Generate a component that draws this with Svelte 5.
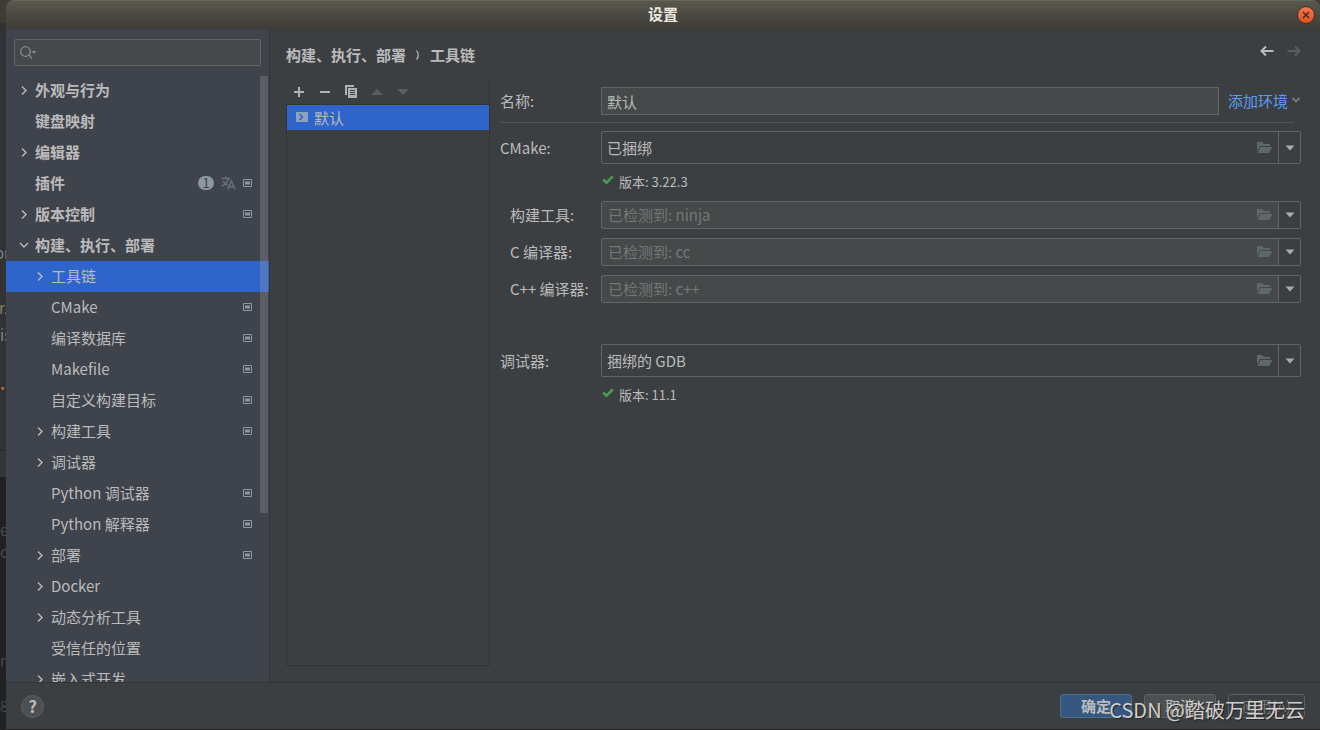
<script lang="ts">
  interface TreeItem {
    label: string;
    level: number;
    arrow?: 'closed' | 'open';
    project?: boolean;
    badge?: number;
  }

  const tree: TreeItem[] = [
    { label: '外观与行为', level: 0, arrow: 'closed' },
    { label: '键盘映射', level: 0 },
    { label: '编辑器', level: 0, arrow: 'closed' },
    { label: '插件', level: 0, badge: 1, project: true },
    { label: '版本控制', level: 0, arrow: 'closed', project: true },
    { label: '构建、执行、部署', level: 0, arrow: 'open' },
    { label: '工具链', level: 1, arrow: 'closed' },
    { label: 'CMake', level: 1, project: true },
    { label: '编译数据库', level: 1, project: true },
    { label: 'Makefile', level: 1, project: true },
    { label: '自定义构建目标', level: 1, project: true },
    { label: '构建工具', level: 1, arrow: 'closed', project: true },
    { label: '调试器', level: 1, arrow: 'closed' },
    { label: 'Python 调试器', level: 1, project: true },
    { label: 'Python 解释器', level: 1, project: true },
    { label: '部署', level: 1, arrow: 'closed', project: true },
    { label: 'Docker', level: 1, arrow: 'closed' },
    { label: '动态分析工具', level: 1, arrow: 'closed' },
    { label: '受信任的位置', level: 1 },
    { label: '嵌入式开发', level: 1, arrow: 'closed' },
  ];

  const tools = [
    { id: 'build-tool', label: '构建工具:', hint: '已检测到: ninja' },
    { id: 'c-compiler', label: 'C 编译器:', hint: '已检测到: cc' },
    { id: 'cpp-compiler', label: 'C++ 编译器:', hint: '已检测到: c++' },
  ];

  // code of the editor window that shows past the dialog's left edge
  const fragments = [
    { text: 'or', left: -5, top: 242, color: '#7f8386' },
    { text: 'r.', left: -1, top: 297, color: '#8f7c66' },
    { text: 'is', left: 0, top: 324, color: '#8a8378' },
    { text: '•', left: -5, top: 377, color: '#a5683a' },
    { text: 'e', left: 0, top: 519, color: '#4a4a4a' },
    { text: 'o', left: 0, top: 541, color: '#4a4a4a' },
    { text: 'n', left: 0, top: 650, color: '#4a4a4a' },
    { text: '8', left: 0, top: 695, color: '#4a4a4a' },
  ];

  let selected = $state('工具链');
  let name = $state('默认');
</script>

{#snippet chevron(open: boolean)}
  <svg width="12" height="12" viewBox="0 0 12 12" fill="none" stroke="currentColor" stroke-width="1.4">
    {#if open}
      <path d="M2 3 6 7 10 3" />
    {:else}
      <path d="M4 1.5 8 5.5 4 9.5" />
    {/if}
  </svg>
{/snippet}

{#snippet comboButtons(what: string)}
  <button class="browse" type="button" aria-label="浏览 {what}">
    <svg width="16" height="12" viewBox="0 0 16 12" fill="#5e6769">
      <path d="M0 0h5l2 2h6v2H3L0 9.5z" />
      <path d="M3.5 5H15.5L12 11H0.5z" />
    </svg>
  </button>
  <button class="drop" type="button" aria-label="展开 {what}">
    <svg width="10" height="6" viewBox="0 0 10 6" fill="#a9abad"><path d="M0.5 0.5h9L5 5.5z" /></svg>
  </button>
{/snippet}

{#snippet version(text: string)}
  <p class="version">
    <svg width="12" height="10" viewBox="0 0 12 10" fill="none" stroke="#499c54" stroke-width="2.6">
      <path d="M1.2 4.5 4.5 7.6 10.8 1.3" />
    </svg>
    {text}
  </p>
{/snippet}

<div class="desktop">
  <div class="editor" aria-hidden="true">
    <div class="editor-title"></div>
    <div class="editor-code"></div>
    <div class="editor-tabs"></div>
    <div class="editor-console"></div>
    {#each fragments as f}
      <span class="fragment" style="left: {f.left}px; top: {f.top}px; color: {f.color}">{f.text}</span>
    {/each}
  </div>

  <div class="dialog" role="dialog" aria-labelledby="title">
    <header class="titlebar">
      <h1 id="title">设置</h1>
      <button class="close" aria-label="关闭">
        <svg width="8" height="8" viewBox="0 0 8 8" stroke="#4a2a18" stroke-width="1.5"><path d="M1 1 7 7M7 1 1 7" /></svg>
      </button>
    </header>

    <div class="body">
      <aside class="sidebar">
        <div class="search">
          <svg width="18" height="14" viewBox="0 0 18 14" fill="none" stroke="#7f8b91" stroke-width="1.3">
            <circle cx="5.5" cy="5.5" r="4.8" />
            <path d="M9 9 12 12.5" />
            <path d="M11.500 5h5l-2.500 2.800z" fill="#7f8b91" stroke="none" />
          </svg>
          <input type="search" aria-label="搜索设置" />
        </div>
        <div class="tree-area">
          <nav class="tree">
            {#each tree as item}
              <button
                class="row"
                class:child={item.level === 1}
                class:selected={item.label === selected}
                onclick={() => (selected = item.label)}
              >
                <span class="arrow">
                  {#if item.arrow}{@render chevron(item.arrow === 'open')}{/if}
                </span>
                <span class="label">{item.label}</span>
                {#if item.badge}
                  <span class="badge">{item.badge}</span>
                  <svg class="mark" width="15" height="14" viewBox="0 0 15 14" fill="none" stroke="#6b717a" stroke-width="1.4">
                    <path d="M0.5 2.5H9M4.7 0.5V2.5M2 5C3 7 5 8.500 7 9.200M7.500 2.500C6.500 6 4 9 0.800 10" />
                    <path d="M6.800 13.300 10.400 5 14 13.300M8 10.700H12.800" />
                  </svg>
                {/if}
                {#if item.project}
                  <svg class="mark" width="9" height="8" viewBox="0 0 9 8">
                    <path d="M0.5 0.5H8.5V7.500H0.500z" fill="none" stroke="#8b98a1" />
                    <path d="M2 2.500H7V5.500H2z" fill="#8b98a1" />
                  </svg>
                {/if}
              </button>
            {/each}
          </nav>
          <div class="thumb"></div>
        </div>
      </aside>

      <main class="content">
        <div class="crumbs">
          <h2>构建、执行、部署</h2>
          <svg width="6" height="10" viewBox="0 0 6 10" fill="none" stroke="#bbbbbb" stroke-width="1.2"><path d="M1.5 0.5Q5 5 1.5 9.5" /></svg>
          <h2>工具链</h2>
          <div class="history">
            <button aria-label="后退">
              <svg width="14" height="12" viewBox="0 0 14 12" fill="none" stroke="#bbbbbb" stroke-width="2"><path d="M13.5 6H2M6 1.5 1.5 6 6 10.5" /></svg>
            </button>
            <button aria-label="前进" disabled>
              <svg width="14" height="12" viewBox="0 0 14 12" fill="none" stroke="#5b5d5f" stroke-width="2"><path d="M0.5 6H12M8 1.5 12.5 6 8 10.5" /></svg>
            </button>
          </div>
        </div>

        <div class="panes">
          <section class="chains">
            <div class="toolbar">
              <button aria-label="添加">
                <svg width="16" height="16" viewBox="0 0 16 16" stroke="#afb1b3" stroke-width="2"><path d="M3 8H13M8 3V13" /></svg>
              </button>
              <button aria-label="移除">
                <svg width="16" height="16" viewBox="0 0 16 16" stroke="#afb1b3" stroke-width="2"><path d="M3 8H13" /></svg>
              </button>
              <button aria-label="复制">
                <svg width="16" height="16" viewBox="0 0 16 16">
                  <path d="M2 11V1H11V3H4V11z" fill="#afb1b3" />
                  <path d="M5 4H14V14H5z" fill="#afb1b3" />
                  <path d="M7 6.5H12M7 8.5H12M7 10.5H12" stroke="#3c3f41" />
                </svg>
              </button>
              <button aria-label="上移" disabled>
                <svg width="16" height="16" viewBox="0 0 16 16" fill="#5b5d5f"><path d="M2 11 8 5 14 11z" /></svg>
              </button>
              <button aria-label="下移" disabled>
                <svg width="16" height="16" viewBox="0 0 16 16" fill="#5b5d5f"><path d="M2 5H14L8 11z" /></svg>
              </button>
            </div>
            <div class="chain-list">
              <button class="chain">
                <svg class="mark" width="12" height="10" viewBox="0 0 12 10">
                  <path d="M0 0H12V10H0z" fill="#8fa3b8" />
                  <path d="M3.5 2 6.5 5 3.5 8" fill="none" stroke="#2f65ca" stroke-width="1.6" />
                </svg>
                默认
              </button>
            </div>
          </section>

          <form class="form" onsubmit={(e) => e.preventDefault()}>
            <div class="line name">
              <label for="name">名称:</label>
              <input id="name" type="text" bind:value={name} />
              <button class="link" type="button">
                添加环境
                <svg class="mark" width="8" height="6" viewBox="0 0 8 6" fill="none" stroke="#878a8c" stroke-width="1.5"><path d="M0.5 1 4 4.5 7.5 1" /></svg>
              </button>
            </div>
            <hr />
            <div class="line">
              <label for="cmake">CMake:</label>
              <div class="combo large">
                <select id="cmake"><option>已捆绑</option></select>
                {@render comboButtons('CMake')}
              </div>
            </div>
            {@render version('版本: 3.22.3')}
            <div class="tools">
              {#each tools as tool}
                <div class="line">
                  <label class="nested" for={tool.id}>{tool.label}</label>
                  <div class="combo">
                    <input id={tool.id} type="text" placeholder={tool.hint} />
                    {@render comboButtons(tool.label)}
                  </div>
                </div>
              {/each}
            </div>
            <div class="line">
              <label for="debugger">调试器:</label>
              <div class="combo large">
                <select id="debugger"><option>捆绑的 GDB</option></select>
                {@render comboButtons('调试器')}
              </div>
            </div>
            {@render version('版本: 11.1')}
          </form>
        </div>
      </main>
    </div>

    <footer class="footer">
      <button class="help" aria-label="帮助">?</button>
      <button class="action primary">确定</button>
      <button class="action">取消</button>
      <button class="action apply" disabled>应用(A)</button>
    </footer>
  </div>

  <div class="watermark">CSDN @踏破万里无云</div>
</div>

<style>
  :global(body) {
    margin: 0;
    background: #232323;
  }

  .desktop {
    position: relative;
    display: flex;
    height: 100vh;
    overflow: hidden;
    padding-left: 6px;
    box-sizing: border-box;
    font-family: 'Noto Sans CJK SC', sans-serif;
    font-size: 15px;
    line-height: 22px;
    color: #bbbbbb;
  }

  button,
  input,
  select {
    font: inherit;
    color: inherit;
    margin: 0;
    padding: 0;
    border: none;
    background: none;
    outline: none;
    min-width: 0;
    box-sizing: border-box;
  }

  h1,
  h2,
  p {
    margin: 0;
    font-size: inherit;
  }

  svg {
    display: block;
    flex: none;
  }

  /* small icons sit a little above the middle of their row */
  .mark {
    margin-bottom: 2px;
  }

  /* window behind the dialog */
  .editor {
    position: absolute;
    inset: 0;
    display: flex;
    flex-direction: column;
  }

  .editor-title {
    flex: 0 0 23px;
    background: #3f3c34;
  }

  .editor-code {
    flex: 0 0 427px;
    background: #303234;
  }

  .editor-tabs {
    flex: 0 0 26px;
    background: #333537;
    border-top: 1px solid #262727;
  }

  .editor-console {
    flex: 1;
    background: #212121;
  }

  .fragment {
    position: absolute;
  }

  .dialog {
    position: relative;
    flex: 1;
    min-width: 0;
    display: flex;
    flex-direction: column;
    background: #3c3f41;
    border-radius: 8px 8px 0 0;
    border-bottom: 1px solid #232323;
    overflow: hidden;
  }

  .titlebar {
    flex: none;
    display: grid;
    grid-template-columns: 1fr auto 1fr;
    align-items: center;
    height: 29px;
    padding-bottom: 1px;
    box-sizing: border-box;
    background: linear-gradient(#5a574d, #3d3c37);
    border-top: 1px solid #69665b;
    color: #ebe9e2;
  }

  .titlebar h1 {
    grid-column: 2;
    font-weight: 700;
    line-height: 26px;
    padding-bottom: 1px;
  }

  .close {
    justify-self: end;
    display: flex;
    align-items: center;
    justify-content: center;
    width: 18px;
    height: 18px;
    margin-right: 5px;
    border: 1px solid #33302a;
    border-radius: 50%;
    background: linear-gradient(#f4794f, #e2501f);
  }

  .body {
    flex: 1;
    min-height: 0;
    display: flex;
  }

  .sidebar {
    flex: 0 0 263px;
    display: flex;
    flex-direction: column;
    background: #3f434c;
    border-right: 1px solid #323435;
  }

  .search {
    flex: none;
    display: flex;
    align-items: center;
    gap: 4px;
    height: 27px;
    margin: 10px 8px 9px;
    padding: 0 5px;
    box-sizing: border-box;
    background: #45494a;
    border: 1px solid #646464;
    border-radius: 2px;
  }

  .search input {
    flex: 1;
  }

  .tree-area {
    position: relative;
    flex: 1;
    min-height: 0;
    overflow: hidden;
  }

  .tree {
    display: flex;
    flex-direction: column;
  }

  .row {
    flex: none;
    display: flex;
    align-items: center;
    gap: 7px;
    height: 31px;
    padding: 0 17px 0 12px;
    font-weight: 700;
    text-align: left;
  }

  .row.child {
    padding-left: 28px;
    font-weight: 400;
  }

  .row.selected {
    background: #2f65ca;
  }

  .arrow {
    width: 12px;
    height: 12px;
    margin-right: -2px;
  }

  .label {
    flex: 1;
    padding-bottom: 2px;
  }

  .badge {
    width: 16px;
    height: 14px;
    margin-bottom: 2px;
    border-radius: 8px;
    background: #8b98a1;
    color: #3f434c;
    font-size: 13px;
    line-height: 14px;
    font-weight: 400;
    text-align: center;
  }

  .thumb {
    position: absolute;
    top: 1px;
    right: 1px;
    width: 8px;
    height: 72%;
    background: rgba(166, 166, 166, 0.28);
  }

  .content {
    flex: 1;
    min-width: 0;
    display: flex;
    flex-direction: column;
    padding: 0 19px 16px 16px;
  }

  .crumbs {
    flex: none;
    display: flex;
    align-items: center;
    gap: 9px;
    height: 51px;
  }

  .history {
    display: flex;
    gap: 13px;
    margin-left: auto;
    padding-bottom: 8px;
  }

  .panes {
    flex: 1;
    min-height: 0;
    display: flex;
    gap: 10px;
  }

  .chains {
    flex: 0 0 204px;
    box-sizing: border-box;
    display: flex;
    flex-direction: column;
    border-right: 1px solid #323435;
  }

  .toolbar {
    flex: none;
    display: flex;
    align-items: center;
    gap: 10px;
    height: 24px;
    padding-left: 5px;
  }

  .chain-list {
    flex: 1;
    border: 1px solid #323435;
    border-right: none;
  }

  .chain {
    display: flex;
    align-items: center;
    gap: 6px;
    width: 100%;
    height: 25px;
    padding-left: 9px;
    background: #2f65ca;
  }

  .form {
    flex: 1;
    min-width: 0;
    padding-top: 7px;
  }

  .line {
    display: flex;
    align-items: center;
  }

  .line label {
    flex: 0 0 101px;
  }

  .line label.nested {
    box-sizing: border-box;
    padding-left: 10px;
  }

  .name input {
    flex: 1;
    height: 28px;
    padding: 0 5px;
    background: #45494a;
    border: 1px solid #646464;
  }

  .link {
    display: flex;
    align-items: center;
    gap: 4px;
    padding: 0 1px 0 9px;
    color: #589df6;
  }

  hr {
    height: 1px;
    margin: 7px 7px 8px 0;
    border: none;
    background: #515355;
  }

  .combo {
    flex: 1;
    min-width: 0;
    display: flex;
    height: 28px;
    box-sizing: border-box;
    background: #45494a;
    border: 1px solid #646464;
    border-radius: 2px;
  }

  .combo.large {
    height: 33px;
    background: #3c3f41;
  }

  .combo input,
  .combo select {
    flex: 1;
    padding: 0 6px;
    appearance: none;
  }

  .combo select {
    padding: 0 5px;
  }

  .combo input::placeholder {
    color: #777777;
    opacity: 1;
  }

  .browse {
    display: flex;
    align-items: center;
    padding: 0 5px 0 6px;
  }

  .drop {
    display: flex;
    align-items: center;
    justify-content: center;
    width: 22px;
    background: #3c3f41;
    border-left: 1px solid #646464;
  }

  .version {
    display: flex;
    align-items: center;
    gap: 5px;
    height: 37px;
    box-sizing: border-box;
    padding: 0 0 2px 102px;
    font-size: 13px;
  }

  .version svg {
    margin-bottom: 3px;
  }

  .tools {
    display: flex;
    flex-direction: column;
    gap: 9px;
    padding-bottom: 41px;
  }

  .footer {
    flex: none;
    display: flex;
    align-items: center;
    gap: 12px;
    height: 47px;
    box-sizing: border-box;
    padding: 0 15px;
    border-top: 1px solid #323435;
  }

  .help {
    width: 23px;
    height: 23px;
    margin-right: auto;
    border: 1px solid #5e6060;
    border-radius: 50%;
    background: #4c5052;
    font-size: 17px;
    font-weight: 700;
    line-height: 20px;
  }

  .action {
    width: 72px;
    height: 24px;
    border: 1px solid #5e6060;
    border-radius: 3px;
    background: #4c5052;
    line-height: 20px;
  }

  .action.primary {
    background: #365880;
    border-color: #4c708c;
    font-weight: 700;
  }

  .action.apply {
    width: 77px;
    background: none;
    color: #777777;
  }

  .watermark {
    position: absolute;
    right: 15px;
    bottom: 6px;
    font-size: 20px;
    line-height: 28px;
    color: #cfcfcf;
    text-shadow: 1px 1px 1px #222222;
    pointer-events: none;
  }
</style>
